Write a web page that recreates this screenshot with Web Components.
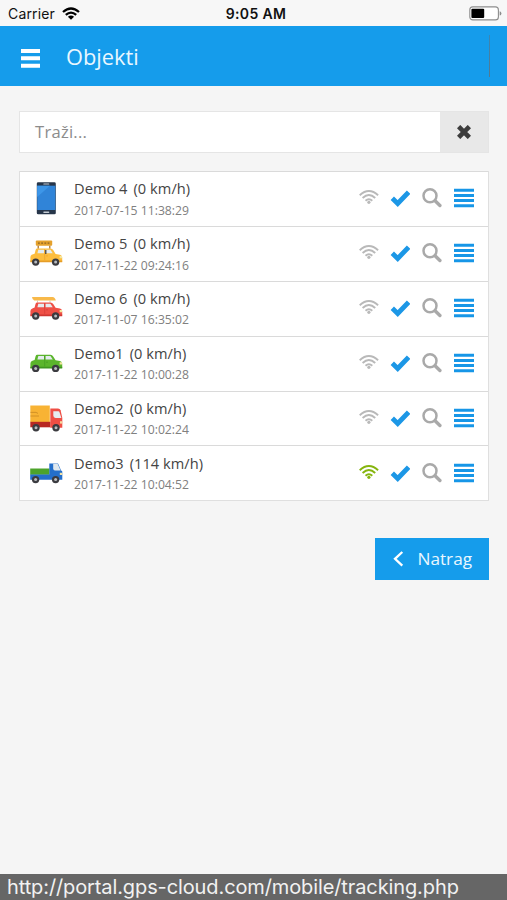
<!DOCTYPE html>
<html lang="hr">
<head>
<meta charset="utf-8">
<title>Objekti</title>
<style>
    html, body {
        margin: 0;
        height: 100%;
        background: #f5f5f5;
        font-family: "Open Sans", "Noto Sans", sans-serif;
    }
</style>
</head>
<body>
<tracking-page>
    <phone-status slot="top" carrier="Carrier" time="9:05 AM"></phone-status>
    <page-header slot="top">Objekti</page-header>
    <search-box placeholder="Traži..."></search-box>
    <object-list>
        <object-row icon="phone" name="Demo 4" speed="0">2017-07-15 11:38:29</object-row>
        <object-row icon="taxi" name="Demo 5" speed="0">2017-11-22 09:24:16</object-row>
        <object-row icon="kayak" name="Demo 6" speed="0">2017-11-07 16:35:02</object-row>
        <object-row icon="car" name="Demo1" speed="0">2017-11-22 10:00:28</object-row>
        <object-row icon="truck" name="Demo2" speed="0">2017-11-22 10:02:24</object-row>
        <object-row icon="pickup" name="Demo3" speed="114" online>2017-11-22 10:04:52</object-row>
    </object-list>
    <back-button>Natrag</back-button>
    <url-bar slot="bottom">http://portal.gps-cloud.com/mobile/tracking.php</url-bar>
</tracking-page>

<script>
// Wheels are the same on all vehicles, only the position changes
const wheels = (x1, x2, y) => [x1, x2].map(x => `
    <circle cx="${x}" cy="${y}" r="3.7" fill="#3b3b40"/>
    <circle cx="${x}" cy="${y}" r="1.5" fill="#b9bcc0"/>`).join('');

// Car body, y is the top of the roof
const car = (y, color, dark) => `
    <g transform="translate(0 ${y})">
        <path fill="${color}" d="M7.2 0H20.5Q22.3 0 23.2 1.6L25.6 5.4L30 6.2Q32.2 6.8 32.2 9V13.2H.4V8.6Q.4 6.6 2.4 6L4.6 5.2L5.6 1.4Q6 0 7.2 0Z"/>
        <path fill="#e4ebee" d="M8.3 1.3H14V4.8H7.4ZM15.5 1.3H20.4L22.8 4.8H15.5Z"/>
        <path fill="${dark}" d="M.4 12H32.2V13.8H.4Z"/>
        <path fill="#f4e6a0" d="M29.6 7.5H32L32.2 9.8H29.6Z"/>
        <path stroke="${dark}" stroke-width=".6" d="M14.7 1V11.5M16 7.4H18"/>
        ${wheels(5.7, 25.6, 13.6)}
    </g>`;

const vehicles = {
    phone: `
        <rect x="6.8" y=".3" width="19" height="32" rx="1.4" fill="#27364a"/>
        <rect x="7.2" y="3.7" width="18.2" height="24.3" fill="#3084d8"/>
        <path fill="#3d96e8" d="M7.2 3.7H20L7.2 15Z"/>
        <rect x="13.3" y="1.5" width="6" height="1" rx=".5" fill="#c5ccd4"/>
        <rect x="13.3" y="29.5" width="6" height="1.4" rx=".6" fill="#c5ccd4"/>`,
    taxi: `
        <rect x="5.8" y="3.6" width="16.4" height="5.2" rx="1" fill="#e5a12c"/>
        <path stroke="#8c6426" stroke-width="1.2" stroke-dasharray="1.8 1.4" d="M8 6.2H20.5"/>
        <path stroke="#a66a1e" stroke-width="1.2" d="M8.2 8.8V11.8M19.8 8.8V11.8"/>
        ${car(11.5, '#fdbd3d', '#e69d27')}
        <path stroke="#3b3b40" stroke-width="1.2" d="M15.8 13V17"/>`,
    kayak: `
        <path fill="#f8b94a" d="M2 4.9H22.5Q25 5 25.8 8.4H4.2Q2.3 7.6 2 4.9Z"/>
        <path stroke="#d8cbb8" stroke-width="1" d="M7.5 8.4V10.6M20 8.4V10.6"/>
        ${car(10.4, '#ef5046', '#cf3732')}`,
    car: car(7.8, '#5bb52c', '#3f9620'),
    truck: `
        <path fill="#f8b334" d="M.3 3.5H19.8V20H.3Z"/>
        <path stroke="#c88922" stroke-width=".8" d="M.5 10.4H6L8 11.4M.5 14H9"/>
        <path fill="#b82822" d="M.3 19.8H20.5V25.3H.3Z"/>
        <path fill="#ef4e44" d="M20.3 6.5H28Q30 6.5 30.6 8.3L32.3 16V25.7H20.3Z"/>
        <path fill="#e6edf0" d="M23.3 9.2H28.5Q29.2 9.2 29.5 10.3L31.4 16H25.6Q23.3 16 23.3 13.6Z"/>
        <path fill="#f6d8a0" d="M30 19.2H32.3V21.6H30Z"/>
        ${wheels(6, 26, 25.8)}`,
    pickup: `
        <path fill="#4ca32b" d="M.2 11.5H19.5V17.8H.2Z"/>
        <path fill="#246fcb" d="M19.3 6.4H28L31 13.2L32.3 14.5V22.8H.2V17.6H19.3Z"/>
        <path fill="#dfe8ee" d="M23.2 6.8H27.6L30.6 13.4H25Q23.2 13.2 23.2 11.4Z"/>
        <path fill="#f3e2a6" d="M29.8 15.8H32.3V18H29.8Z"/>
        ${wheels(5.6, 25.6, 22.6)}`
};

class TrackingPage extends HTMLElement {
    constructor() {
        super();
        this.attachShadow({ mode: 'open' });
        this.shadowRoot.innerHTML = `
            <style>
                :host {
                    display: flex;
                    flex-direction: column;
                    height: 100vh;
                    overflow: hidden;
                }
                main {
                    flex: 1;
                    display: flex;
                    flex-direction: column;
                    padding: 25px 18.5px 0 19px;
                }
            </style>
            <slot name="top"></slot>
            <main><slot></slot></main>
            <slot name="bottom"></slot>
        `;
    }
}

class PhoneStatus extends HTMLElement {
    constructor() {
        super();
        this.attachShadow({ mode: 'open' });
        this.shadowRoot.innerHTML = `
            <style>
                :host {
                    display: grid;
                    grid-template-columns: 1fr auto 1fr;
                    align-items: center;
                    box-sizing: border-box;
                    height: 25.5px;
                    padding: 1px 5px 0 8px;
                    background: #f7f7f7;
                    color: #111;
                    font: 14px/20px Inter, sans-serif;
                }
                .left {
                    display: flex;
                    align-items: center;
                    gap: 7px;
                }
                .carrier {
                    padding-top: 1px;
                    letter-spacing: 0.15px;
                }
                .time {
                    font-weight: 600;
                    letter-spacing: 0.35px;
                    padding: 1px 0 0 2px;
                }
                svg {
                    display: block;
                }
                .battery {
                    justify-self: end;
                }
            </style>
            <div class="left">
                <span class="carrier"></span>
                <svg width="18" height="13" viewBox="0 0 18 13">
                    <g fill="none" stroke="#000" stroke-width="2.3">
                        <path d="M1 5Q9-2 17 5"/>
                        <path d="M3.8 7.9Q9 3.4 14.2 7.9"/>
                    </g>
                    <path d="M9 12.8L5.9 9.7Q9 7.3 12.1 9.7Z"/>
                </svg>
            </div>
            <span class="time"></span>
            <svg class="battery" width="33" height="15" viewBox="0 0 33 15">
                <rect x=".8" y=".9" width="28.6" height="13" rx="3" fill="#fff" stroke="#8d8d8d" stroke-width="1.1"/>
                <rect x="2.4" y="2.7" width="12.8" height="9.4" rx="1"/>
                <path fill="#8d8d8d" d="M30.7 5.2Q32.4 5.7 32.4 7.4T30.7 9.6Z"/>
            </svg>
        `;
    }

    connectedCallback() {
        this.shadowRoot.querySelector('.carrier').innerText = this.getAttribute('carrier');
        this.shadowRoot.querySelector('.time').innerText = this.getAttribute('time');
    }
}

class PageHeader extends HTMLElement {
    constructor() {
        super();
        this.attachShadow({ mode: 'open' });
        this.shadowRoot.innerHTML = `
            <style>
                :host {
                    display: flex;
                    align-items: center;
                    box-sizing: border-box;
                    height: 60.5px;
                    padding: 0 17px 0 21px;
                    background: #159ceb;
                    color: #e9f7ff;
                    font-size: 21.8px;
                    line-height: 30px;
                }
                svg {
                    margin: 5px 26px 0 0;
                }
                .title {
                    flex: 1;
                    padding-top: 1.5px;
                }
                .divider {
                    width: 1px;
                    height: 42px;
                    background: linear-gradient(#3a86b4, #56788c);
                }
            </style>
            <svg width="19" height="19" viewBox="0 0 19 19" fill="#fff">
                <path d="M0 0H19V4H0ZM0 7.3H19V11.3H0ZM0 14.7H19V18.7H0Z"/>
            </svg>
            <span class="title"><slot></slot></span>
            <span class="divider"></span>
        `;
    }
}

class SearchBox extends HTMLElement {
    constructor() {
        super();
        this.attachShadow({ mode: 'open' });
        this.shadowRoot.innerHTML = `
            <style>
                :host {
                    display: flex;
                    box-sizing: border-box;
                    height: 42px;
                    border: 1px solid #e5e5e5;
                    background: #fff;
                }
                .field {
                    flex: 1;
                    padding: 0 15px;
                    color: #8c8c8c;
                    font-size: 16.6px;
                    letter-spacing: 0.25px;
                    line-height: 40px;
                }
                .clear {
                    display: flex;
                    align-items: center;
                    justify-content: center;
                    width: 48px;
                    background: #e8e8e8;
                }
            </style>
            <div class="field"></div>
            <div class="clear">
                <svg width="14" height="14" viewBox="0 0 14 14" fill="none" stroke="#3d3d3d">
                    <path stroke-width="4.7" d="M1.6 1.6L12.4 12.4M12.4 1.6L1.6 12.4"/>
                </svg>
            </div>
        `;
    }

    connectedCallback() {
        this.shadowRoot.querySelector('.field').innerText = this.getAttribute('placeholder');
    }
}

class ObjectList extends HTMLElement {
    constructor() {
        super();
        this.attachShadow({ mode: 'open' });
        this.shadowRoot.innerHTML = `
            <style>
                :host {
                    display: block;
                    margin-top: 18px;
                    border: 1px solid #dfdfdf;
                    border-top: 0;
                    background: #fff;
                }
            </style>
            <slot></slot>
        `;
    }
}

class ObjectRow extends HTMLElement {
    constructor() {
        super();
        this.attachShadow({ mode: 'open' });
        this.shadowRoot.innerHTML = `
            <style>
                :host {
                    --signal: #b9b9b9;
                    display: flex;
                    align-items: center;
                    box-sizing: border-box;
                    height: 54.9px;
                    padding: 0 13.5px 0 10px;
                    border-top: 1px solid #dadada;
                }
                :host([online]) {
                    --signal: #86b50e;
                }
                svg {
                    display: block;
                }
                .info {
                    flex: 1;
                    margin-left: 11px;
                    padding-top: 1px;
                }
                .title {
                    display: flex;
                    gap: 6px;
                    color: #444;
                    font-size: 14.6px;
                    letter-spacing: 0.05px;
                    line-height: 20px;
                    white-space: nowrap;
                }
                .date {
                    margin-top: 2.5px;
                    color: #808080;
                    font-size: 12.2px;
                    line-height: 20px;
                }
                .actions {
                    display: flex;
                    align-items: center;
                    gap: 11.8px;
                    padding-bottom: 1px;
                }
            </style>
            <svg class="vehicle" width="33" height="33" viewBox="0 0 33 33" fill="none"></svg>
            <div class="info">
                <div class="title"><span class="name"></span><span class="speed"></span></div>
                <div class="date"><slot></slot></div>
            </div>
            <div class="actions">
                <svg width="20" height="20" viewBox="0 0 20 20" fill="none" stroke="var(--signal)" stroke-width="1.9">
                    <path d="M.7 7.2Q9.9-1 19.1 7.2M3.6 10Q9.9 4.2 16.2 10M6.5 12.7Q9.9 9.7 13.3 12.7"/>
                    <circle cx="9.9" cy="14.3" r="1.6" fill="var(--signal)" stroke="none"/>
                </svg>
                <svg width="20" height="20" viewBox="0 0 20 20" fill="none" stroke="#1c97e6">
                    <path stroke-width="4.8" d="M2.3 10.3L7.7 15.5L18.6 4.2"/>
                </svg>
                <svg width="20" height="20" viewBox="0 0 20 20" fill="none" stroke="#a9a9a9">
                    <circle cx="8" cy="7.8" r="6.5" stroke-width="2.5"/>
                    <path stroke-width="3.4" stroke-linecap="round" d="M13.3 13.1L17.9 17.5"/>
                </svg>
                <svg width="20" height="20" viewBox="0 0 20 20" fill="#1796e7">
                    <path d="M0 .8H20V3.8H0ZM0 6H20V9H0ZM0 11.1H20V14.1H0ZM0 16.2H20V19.2H0Z"/>
                </svg>
            </div>
        `;
    }

    connectedCallback() {
        this.shadowRoot.querySelector('.vehicle').innerHTML = vehicles[this.getAttribute('icon')];
        this.shadowRoot.querySelector('.name').innerText = this.getAttribute('name');
        this.shadowRoot.querySelector('.speed').innerText = `(${this.getAttribute('speed')} km/h)`;
    }
}

class BackButton extends HTMLElement {
    constructor() {
        super();
        this.attachShadow({ mode: 'open' });
        this.shadowRoot.innerHTML = `
            <style>
                :host {
                    display: flex;
                    align-items: center;
                    align-self: flex-end;
                    box-sizing: border-box;
                    width: 114px;
                    height: 42px;
                    margin-top: 37px;
                    padding: 0 0 1px 18px;
                    gap: 14px;
                    background: #159ceb;
                    color: #e9f7ff;
                    font-size: 17.2px;
                    line-height: 24px;
                }
            </style>
            <svg width="11" height="16" viewBox="0 0 11 16" fill="none" stroke="#fff" stroke-width="2.3">
                <path d="M9.3 1L2 7.8L9.3 14.6"/>
            </svg>
            <span><slot></slot></span>
        `;
    }
}

class UrlBar extends HTMLElement {
    constructor() {
        super();
        this.attachShadow({ mode: 'open' });
        this.shadowRoot.innerHTML = `
            <style>
                :host {
                    display: block;
                    box-sizing: border-box;
                    height: 26px;
                    padding-left: 7px;
                    background: #666;
                    color: #f2f2f2;
                    font: 20px/27px Inter, sans-serif;
                    letter-spacing: -0.11px;
                    white-space: nowrap;
                }
            </style>
            <slot></slot>
        `;
    }
}

customElements.define('tracking-page', TrackingPage);
customElements.define('phone-status', PhoneStatus);
customElements.define('page-header', PageHeader);
customElements.define('search-box', SearchBox);
customElements.define('object-list', ObjectList);
customElements.define('object-row', ObjectRow);
customElements.define('back-button', BackButton);
customElements.define('url-bar', UrlBar);
</script>
</body>
</html>
